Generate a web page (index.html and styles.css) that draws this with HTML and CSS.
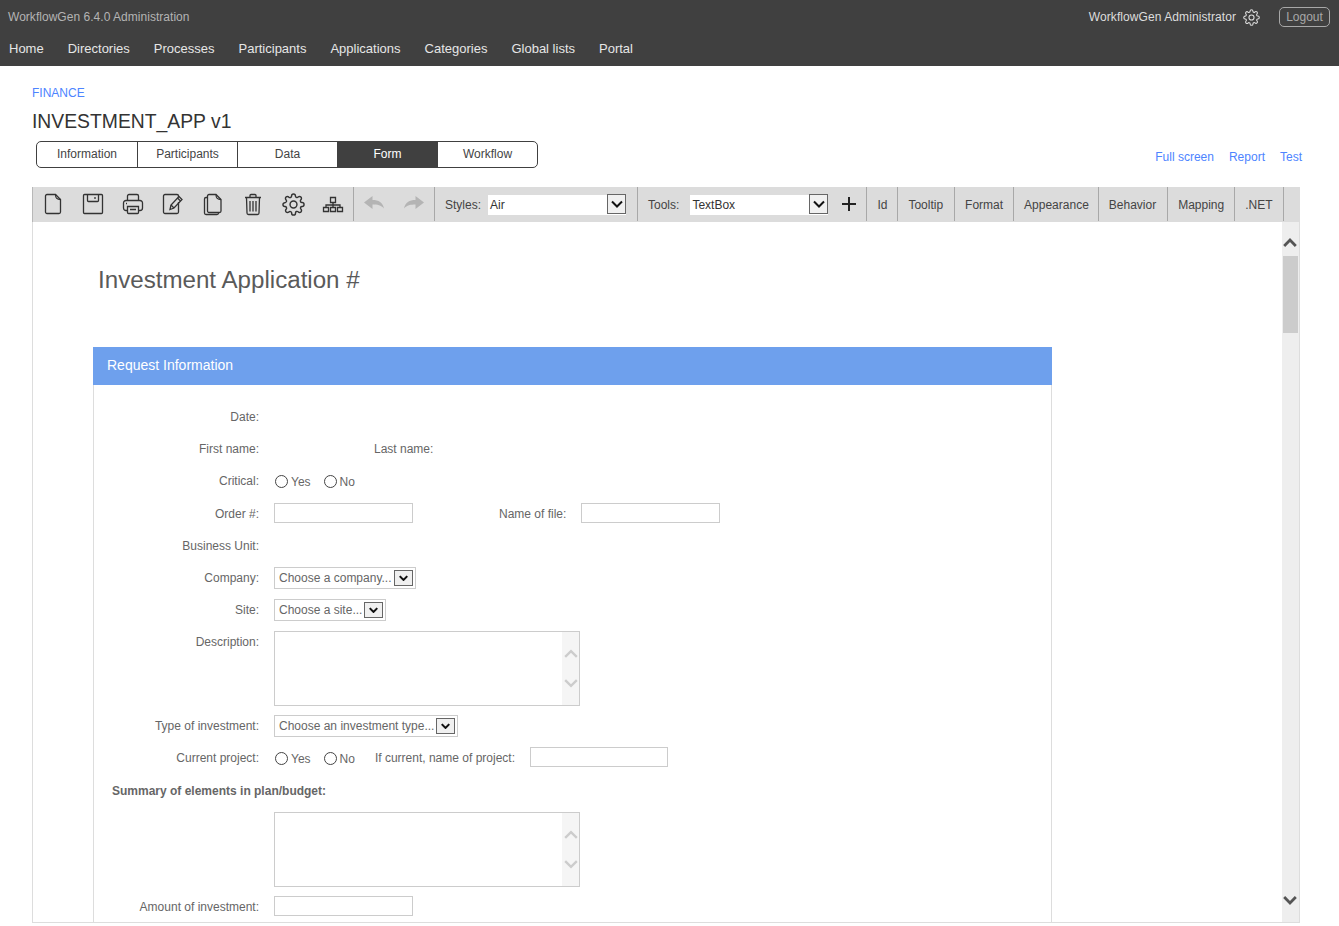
FILE: index.html
```html
<!DOCTYPE html>
<html lang="en">
<head>
  <meta charset="UTF-8">
  <title>WorkflowGen Administration</title>
  <link rel="stylesheet" href="styles.css">
</head>
<body>
  <svg class="defs" width="0" height="0">
    <symbol id="gear" viewBox="0 0 24 24">
      <circle cx="12" cy="12" r="3.6"/>
      <path d="M19.4 15a1.65 1.65 0 0 0 .33 1.82l.06.06a2 2 0 0 1 0 2.83 2 2 0 0 1-2.83 0l-.06-.06a1.65 1.65 0 0 0-1.82-.33 1.65 1.65 0 0 0-1 1.51V21a2 2 0 0 1-2 2 2 2 0 0 1-2-2v-.09A1.65 1.65 0 0 0 9 19.4a1.65 1.65 0 0 0-1.82.33l-.06.06a2 2 0 0 1-2.83 0 2 2 0 0 1 0-2.83l.06-.06a1.65 1.65 0 0 0 .33-1.82 1.65 1.65 0 0 0-1.51-1H3a2 2 0 0 1-2-2 2 2 0 0 1 2-2h.09A1.65 1.65 0 0 0 4.6 9a1.65 1.65 0 0 0-.33-1.82l-.06-.06a2 2 0 0 1 0-2.83 2 2 0 0 1 2.83 0l.06.06a1.65 1.65 0 0 0 1.82.33H9a1.65 1.65 0 0 0 1-1.51V3a2 2 0 0 1 2-2 2 2 0 0 1 2 2v.09a1.65 1.65 0 0 0 1 1.51 1.65 1.65 0 0 0 1.82-.33l.06-.06a2 2 0 0 1 2.83 0 2 2 0 0 1 0 2.83l-.06.06a1.65 1.65 0 0 0-.33 1.82V9a1.65 1.65 0 0 0 1.51 1H21a2 2 0 0 1 2 2 2 2 0 0 1-2 2h-.09a1.65 1.65 0 0 0-1.51 1z"/>
    </symbol>
    <symbol id="chev-down" viewBox="0 0 12 8">
      <path d="M1 1.5l5 5 5-5"/>
    </symbol>
    <symbol id="chev-up" viewBox="0 0 12 8">
      <path d="M1 6.5l5-5 5 5"/>
    </symbol>
  </svg>

  <header class="topbar">
    <div class="topbar-row">
      <span class="brand">WorkflowGen 6.4.0 Administration</span>
      <div class="user">
        <span class="user-name">WorkflowGen Administrator</span>
        <svg class="user-gear" width="17" height="17"><use href="#gear"/></svg>
        <a class="logout">Logout</a>
      </div>
    </div>
    <nav class="nav">
      <a>Home</a>
      <a>Directories</a>
      <a>Processes</a>
      <a>Participants</a>
      <a>Applications</a>
      <a>Categories</a>
      <a>Global lists</a>
      <a>Portal</a>
    </nav>
  </header>

  <main class="page">
    <a class="crumb">FINANCE</a>
    <h1 class="app-title">INVESTMENT_APP v1</h1>

    <div class="tab-row">
      <div class="tabs">
        <a class="tab">Information</a>
        <a class="tab">Participants</a>
        <a class="tab">Data</a>
        <a class="tab active">Form</a>
        <a class="tab">Workflow</a>
      </div>
      <div class="side-links">
        <a>Full screen</a>
        <a>Report</a>
        <a>Test</a>
      </div>
    </div>

    <div class="toolbar">
      <div class="tb-group">
        <span class="tb-icon"><svg width="24" height="24" viewBox="0 0 24 24"><path d="M4.5 4a1.5 1.5 0 0 1 1.5-1.5h8.5l5 5V20a1.5 1.5 0 0 1-1.5 1.5H6A1.5 1.5 0 0 1 4.500 20z"/><path d="M14.500 2.500c0 3 .5 5 5 5"/></svg></span>
        <span class="tb-icon"><svg width="24" height="24" viewBox="0 0 24 24"><path d="M3.500 2.500h17a1 1 0 0 1 1 1v17a1 1 0 0 1-1 1h-17a1 1 0 0 1-1-1v-17a1 1 0 0 1 1-1z"/><path d="M6.500 2.500v6a1 1 0 0 0 1 1h9a1 1 0 0 0 1-1v-6M14 5v2"/></svg></span>
        <span class="tb-icon"><svg width="24" height="24" viewBox="0 0 24 24"><path d="M6.500 8V4a1.500 1.500 0 0 1 1.500-1.500h8a1.500 1.500 0 0 1 1.500 1.500v4"/><path d="M6.500 18.500H5A2.500 2.500 0 0 1 2.500 16v-5A2.500 2.500 0 0 1 5 8.500h14a2.500 2.500 0 0 1 2.500 2.500v5a2.500 2.500 0 0 1-2.500 2.500h-1.500"/><path d="M6.500 14.500h11v6a1 1 0 0 1-1 1h-9a1 1 0 0 1-1-1z"/><path d="M9 17.500h6M5 11.500h1"/></svg></span>
        <span class="tb-icon"><svg width="24" height="24" viewBox="0 0 24 24"><path d="M17.500 10v10a1.500 1.500 0 0 1-1.500 1.500H4A1.500 1.500 0 0 1 2.500 20V4A1.500 1.500 0 0 1 4 2.500h12a1.500 1.500 0 0 1 1.500 1.500v1"/><path d="M9 17.500l1-4.500 8-8.500 3 3-8 8.500z"/><path d="M10 13l3 3M16.500 6l3 3"/></svg></span>
        <span class="tb-icon"><svg width="24" height="24" viewBox="0 0 24 24"><path d="M8 2.500h7l5 5V19a1.500 1.500 0 0 1-1.500 1.500H8A1.500 1.500 0 0 1 6.500 19V4A1.500 1.500 0 0 1 8 2.500z"/><path d="M15 2.500c0 3 .5 5 5 5"/><path d="M6.500 5.500H5A1.500 1.500 0 0 0 3.500 7v14A1.500 1.500 0 0 0 5 22.500h11a1.500 1.500 0 0 0 1.500-1.500v-.5"/></svg></span>
        <span class="tb-icon"><svg width="24" height="24" viewBox="0 0 24 24"><path d="M4 5.500h16M9 5V3.500a1 1 0 0 1 1-1h4a1 1 0 0 1 1 1V5"/><path d="M5.500 5.500l.5 15.500a1.500 1.500 0 0 0 1.500 1.500h9A1.500 1.500 0 0 0 18 21l.5-15.500"/><path d="M9 9v10.500M12 9v10.500M15 9v10.500"/></svg></span>
        <span class="tb-icon"><svg class="tb-gear" width="23" height="23"><use href="#gear"/></svg></span>
        <span class="tb-icon"><svg width="24" height="24" viewBox="0 0 24 24"><path d="M9.500 5.500h5v5h-5zM2.500 15.500h5v4h-5zM9.500 15.500h5v4h-5zM16.500 15.500h5v4h-5z"/><path d="M12 10.500v5M5 15.500v-2.500h14v2.500"/></svg></span>
      </div>
      <div class="tb-group">
        <span class="tb-icon"><svg class="solid" width="24" height="24" viewBox="0 0 24 24"><path d="M2 10.500l8.500-6.500v4c6 0 10.500 2.500 11.500 8.500-3-3.500-6.500-4-11.500-4v4.500z"/></svg></span>
        <span class="tb-icon"><svg class="solid" width="24" height="24" viewBox="0 0 24 24"><path d="M22 10.500l-8.500-6.500v4c-6 0-10.500 2.500-11.500 8.500 3-3.500 6.500-4 11.500-4v4.500z"/></svg></span>
      </div>
      <div class="tb-group tb-field">
        <label>Styles:</label>
        <div class="tb-select">
          <span>Air</span>
          <span class="sel-btn"><svg width="12" height="8"><use href="#chev-down"/></svg></span>
        </div>
      </div>
      <div class="tb-group tb-field tb-tools">
        <label>Tools:</label>
        <div class="tb-select">
          <span>TextBox</span>
          <span class="sel-btn"><svg width="12" height="8"><use href="#chev-down"/></svg></span>
        </div>
        <svg class="plus" width="14" height="14" viewBox="0 0 14 14"><path d="M7 0v14M0 7h14"/></svg>
      </div>
      <a class="tb-group tb-text">Id</a>
      <a class="tb-group tb-text tb-wider">Tooltip</a>
      <a class="tb-group tb-text">Format</a>
      <a class="tb-group tb-text tb-narrower">Appearance</a>
      <a class="tb-group tb-text tb-wider">Behavior</a>
      <a class="tb-group tb-text">Mapping</a>
      <a class="tb-group tb-text">.NET</a>
    </div>

    <div class="panel">
      <div class="canvas">
        <h2 class="form-title">Investment Application #</h2>
        <section class="form-section">
          <div class="section-head">Request Information</div>
          <div class="section-body">
            <div class="row"><label>Date:</label></div>
            <div class="row">
              <label>First name:</label>
              <label class="inline-label last-name">Last name:</label>
            </div>
            <div class="row">
              <label>Critical:</label>
              <span class="radio"></span><span class="radio-text">Yes</span>
              <span class="radio"></span><span class="radio-text">No</span>
            </div>
            <div class="row row-tall">
              <label>Order #:</label>
              <input class="text-input" type="text">
              <label class="inline-label file-label">Name of file:</label>
              <input class="text-input" type="text">
            </div>
            <div class="row"><label>Business Unit:</label></div>
            <div class="row">
              <label>Company:</label>
              <div class="select"><span>Choose a company...</span><span class="sel-btn"><svg width="9" height="6"><use href="#chev-down"/></svg></span></div>
            </div>
            <div class="row">
              <label>Site:</label>
              <div class="select"><span>Choose a site...</span><span class="sel-btn"><svg width="9" height="6"><use href="#chev-down"/></svg></span></div>
            </div>
            <div class="row row-area">
              <label>Description:</label>
              <div class="area">
                <div class="area-scroll">
                  <svg width="14" height="10"><use href="#chev-up"/></svg>
                  <svg width="14" height="10"><use href="#chev-down"/></svg>
                </div>
              </div>
            </div>
            <div class="row">
              <label>Type of investment:</label>
              <div class="select"><span>Choose an investment type...</span><span class="sel-btn"><svg width="9" height="6"><use href="#chev-down"/></svg></span></div>
            </div>
            <div class="row">
              <label>Current project:</label>
              <span class="radio"></span><span class="radio-text">Yes</span>
              <span class="radio"></span><span class="radio-text">No</span>
              <label class="inline-label project-label">If current, name of project:</label>
              <input class="text-input project-input" type="text">
            </div>
            <div class="row summary">Summary of elements in plan/budget:</div>
            <div class="row row-area row-area-2">
              <label></label>
              <div class="area">
                <div class="area-scroll">
                  <svg width="14" height="10"><use href="#chev-up"/></svg>
                  <svg width="14" height="10"><use href="#chev-down"/></svg>
                </div>
              </div>
            </div>
            <div class="row row-amount">
              <label>Amount of investment:</label>
              <input class="text-input" type="text">
            </div>
          </div>
        </section>
      </div>
      <div class="scrollbar">
        <svg width="14" height="10"><use href="#chev-up"/></svg>
        <div class="thumb"></div>
        <svg class="scroll-down" width="14" height="10"><use href="#chev-down"/></svg>
      </div>
    </div>
  </main>
</body>
</html>
```

FILE: styles.css
```css
* {
  box-sizing: border-box;
}
html, body {
  height: 100%;
}
body {
  margin: 0;
  overflow: hidden;
  background-color: #fff;
  font-family: "Liberation Sans", Arial, sans-serif;
  font-size: 12px;
  color: #666;
}
.defs {
  display: block;
  height: 0;
}
symbol path, symbol circle {
  fill: none;
}

/* top bar */
.topbar {
  height: 66px;
  background-color: #404040;
}
.topbar-row {
  display: flex;
  align-items: center;
  justify-content: space-between;
  height: 34px;
  padding: 0 9px 0 8px;
}
.brand {
  color: #b4b4b4;
  letter-spacing: 0.03px;
}
.user {
  display: flex;
  align-items: center;
}
.user-name {
  color: #ddd;
  letter-spacing: 0.08px;
}
.user-gear {
  margin: 0 19px 0 7px;
  fill: none;
  stroke: #ddd;
  stroke-width: 1.5;
}
.logout {
  height: 20px;
  width: 51px;
  border: 1px solid #a8a8a8;
  border-radius: 5px;
  color: #a8a8a8;
  line-height: 18px;
  text-align: center;
}
.nav {
  display: flex;
  gap: 24px;
  height: 28px;
  padding-left: 9px;
  align-items: center;
  font-size: 13px;
  color: #e6e6e6;
}

/* page head */
.page {
  padding: 20px 39px 0 32px;
}
.crumb {
  display: block;
  line-height: 14px;
  color: #4d84ff;
}
.app-title {
  margin: 10px 0 0;
  font-size: 19.33px;
  font-weight: normal;
  line-height: 24px;
  color: #333;
}
.tab-row {
  display: flex;
  justify-content: space-between;
  align-items: flex-end;
  margin: 7px -2px 0 4px;
}
.tabs {
  display: flex;
  width: 502px;
  height: 27px;
  border: 1px solid #404040;
  border-radius: 5px;
  overflow: hidden;
}
.tab {
  width: 100px;
  border-right: 1px solid #404040;
  line-height: 24px;
  text-align: center;
  color: #444;
}
.tab:first-child {
  width: 101px;
}
.tab:last-child {
  width: 99px;
  border-right: none;
}
.tab.active {
  background-color: #404040;
  color: #fff;
}
.side-links {
  display: flex;
  gap: 15px;
  padding-bottom: 4px;
  color: #4d84ff;
}

/* toolbar */
.toolbar {
  display: flex;
  height: 35px;
  margin-top: 19px;
  border-left: 1px solid #b8b8b8;
  background-color: #dcdcdc;
  color: #444;
}
.tb-group {
  display: flex;
  align-items: center;
  height: 34px;
  border-right: 1px solid #a8a8a8;
}
.tb-icon {
  display: flex;
  align-items: center;
  justify-content: center;
  width: 40px;
}
.tb-icon svg {
  fill: none;
  stroke: #333;
  stroke-width: 1.3;
}
.tb-icon .solid {
  fill: #b4b4b4;
  stroke: none;
}
.tb-icon .tb-gear {
  stroke-width: 1.5;
}
.tb-field {
  padding: 0 11px 0 10px;
}
.tb-tools {
  padding-right: 10px;
}
.tb-field label {
  margin-right: 7px;
  padding-top: 2px;
}
.tb-tools label {
  margin-right: 11px;
}
.tb-select {
  display: flex;
  justify-content: space-between;
  align-items: flex-start;
  width: 138px;
  height: 20px;
  margin-top: 2px;
  padding-left: 2px;
  background-color: #fff;
  color: #333;
  line-height: 20px;
}
.tb-select .sel-btn {
  margin-top: -1px;
}
.sel-btn {
  display: flex;
  align-items: center;
  justify-content: center;
  width: 19px;
  height: 20px;
  border: 1px solid #666;
  background-color: #f0f0f0;
}
.sel-btn svg {
  fill: none;
  stroke: #111;
  stroke-width: 2;
}
.plus {
  margin-left: 14px;
  fill: none;
  stroke: #222;
  stroke-width: 2;
}
.tb-text {
  padding: 2px 10px 0;
}
.tb-wider {
  padding-right: 11px;
}
.tb-narrower {
  padding-right: 9px;
}

/* panel with the form */
.panel {
  display: flex;
  height: 701px;
  border: 1px solid #ddd;
  border-top: none;
  overflow: hidden;
}
.canvas {
  flex: 1;
  padding-left: 60px;
}
.form-title {
  margin: 0 0 0 5px;
  padding-top: 44px;
  height: 125px;
  font-size: 24.15px;
  font-weight: normal;
  line-height: 28px;
  color: #5a5a5a;
}
.form-section {
  width: 959px;
}
.section-head {
  height: 38px;
  padding-left: 14px;
  background-color: #6ea0ed;
  font-size: 14px;
  line-height: 37px;
  color: #fff;
}
.section-body {
  padding: 16px 0 20px 0;
  border: 1px solid #ddd;
  border-top: none;
}
.row {
  display: flex;
  align-items: center;
  height: 32px;
}
.row > label:first-child {
  flex: none;
  width: 165px;
  margin-right: 15px;
  text-align: right;
}
.row-tall {
  height: 33px;
  padding-bottom: 1px;
}
.row-tall label {
  padding-top: 1px;
}
.row-area {
  height: 84px;
  align-items: flex-start;
  padding-top: 5px;
}
.row-area > label:first-child {
  padding-top: 4px;
}
.row-area-2 {
  padding-top: 6px;
}
.summary {
  padding: 1px 0 0 18px;
  font-weight: bold;
}
.row-amount > label:first-child {
  padding-top: 1px;
}
.inline-label {
  text-align: right;
}
.last-name {
  margin-left: 100px;
}
.file-label {
  margin: 0 15px 0 86px;
}
.project-label {
  margin: 0 15px 0 8px;
}
.radio {
  width: 13px;
  height: 13px;
  margin-left: 1px;
  border: 1px solid #444;
  border-radius: 50%;
  background-color: #fff;
}
.radio-text {
  margin: 1px 12px 0 3px;
}
.text-input {
  width: 139px;
  height: 20px;
  padding: 0 4px;
  border: 1px solid #ccc;
  background-color: #fff;
}
.project-input {
  width: 138px;
  margin-bottom: 2px;
}
.select {
  display: flex;
  align-items: center;
  height: 22px;
  padding: 0 2px 0 4px;
  border: 1px solid #ccc;
}
.select .sel-btn {
  height: 16px;
  margin-left: 2px;
}
.select .sel-btn svg {
  stroke-width: 2.8;
}
.area {
  display: flex;
  justify-content: flex-end;
  width: 306px;
  height: 75px;
  border: 1px solid #ccc;
}
.area-scroll {
  display: flex;
  flex-direction: column;
  align-items: center;
  gap: 19px;
  width: 17px;
  padding-top: 17px;
  background-color: #f5f5f5;
}
.area-scroll svg {
  fill: none;
  stroke: #ccc;
  stroke-width: 2;
}

/* outer scrollbar */
.scrollbar {
  display: flex;
  flex: none;
  flex-direction: column;
  align-items: center;
  width: 17px;
  padding-top: 16px;
  background-color: #eee;
}
.scrollbar svg {
  margin-right: 1px;
  fill: none;
  stroke: #555;
  stroke-width: 2.4;
}
.thumb {
  width: 15px;
  height: 77px;
  margin-top: 8px;
  background-color: #ccc;
}
.scrollbar .scroll-down {
  margin-top: 562px;
}
```
